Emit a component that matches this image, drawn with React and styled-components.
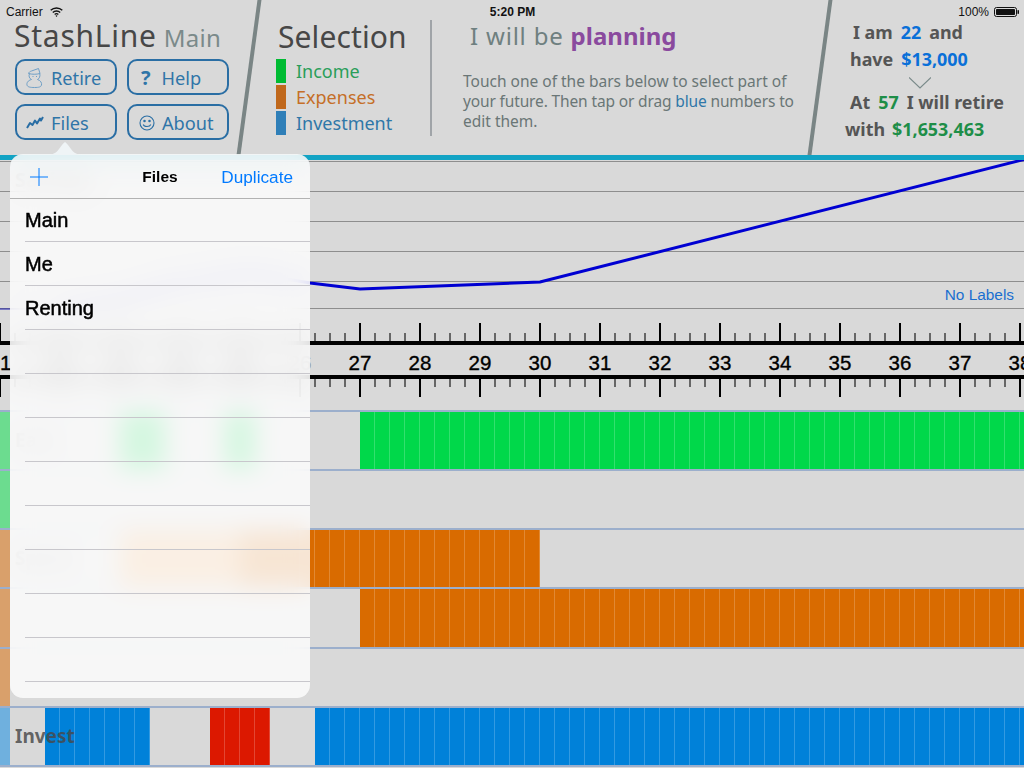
import React from 'react';
import styled, { createGlobalStyle } from 'styled-components';

const GREEN = '#00d84a';
const ORANGE = '#d96b00';
const BLUE = '#0081d9';
const RED = '#dc1800';
const TICKS = Array.from({ length: 69 }, (_, i) => i * 15);
const YEARS = Array.from({ length: 18 }, (_, i) => 21 + i);
const GRID = [1, 31, 61, 91, 121, 148];

const rows = [
  { stripe: '#6cdc8f', label: 'Earn', parts: [[110], [45, GREEN], [60], [30, GREEN], [105], [664, GREEN]] },
  { stripe: '#6cdc8f', parts: [] },
  { stripe: '#d9a06b', label: 'Spend', parts: [[110], [120, '#eda860'], [300, ORANGE]] },
  { stripe: '#d9a06b', parts: [[350], [664, ORANGE]] },
  { stripe: '#d9a06b', parts: [] },
  { stripe: '#6fb0de', label: 'Invest', strong: true, parts: [[35], [105, BLUE], [60], [60, RED], [45], [709, BLUE]] },
];

const GlobalStyle = createGlobalStyle`
  html, body {
    margin: 0;
    background: #d9d9d9;
    overflow: hidden;
  }
`;

const Page = styled.div`
  position: relative;
  width: 1024px;
  height: 768px;
  overflow: hidden;
  font-family: "Noto Sans", sans-serif;
`;

const StatusBar = styled.div`
  position: absolute;
  top: 5px;
  left: 6px;
  right: 5px;
  height: 14px;
  display: flex;
  align-items: center;
  justify-content: space-between;
  font: 12px/14px "Liberation Sans", sans-serif;
  color: #111;
  z-index: 2;
`;

const StatusSide = styled.div`
  width: 200px;
  display: flex;
  align-items: center;
  justify-content: ${p => (p.$right ? 'flex-end' : 'flex-start')};
  gap: ${p => (p.$right ? 5 : 7)}px;
`;

const Clock = styled.div`
  font-weight: 700;
  font-size: 12px;
`;

const Header = styled.header`
  height: 155px;
  display: flex;
  overflow: hidden;
`;

const Brand = styled.div`
  width: 233px;
  padding: 17px 0 0 14px;
  flex: none;
`;

const Title = styled.div`
  height: 42px;
  display: flex;
  align-items: baseline;
  gap: 7px;
  font-size: 30px;
  line-height: 38px;
  color: #474747;
  letter-spacing: 0.75px;
`;

const SubTitle = styled.span`
  font-size: 24px;
  letter-spacing: 0.3px;
  color: #7b8a8a;
`;

const ButtonGrid = styled.div`
  margin-left: 1px;
  display: grid;
  grid-template-columns: 102px 102px;
  grid-auto-rows: 36px;
  gap: 9px 10px;
`;

const Button = styled.div`
  box-sizing: border-box;
  border: 2px solid #2a6ea4;
  border-radius: 10px;
  display: flex;
  align-items: center;
  padding: 1px 0 0 ${p => p.$pad}px;
  gap: ${p => p.$gap}px;
  font-size: 18.2px;
  color: #2f75a8;
`;

const Question = styled.span`
  font-weight: 700;
  font-size: 20px;
`;

const Slash = styled.div`
  width: 4px;
  flex: none;
  background: #7a8585;
  transform: skewX(-7.7deg);
`;

const Selection = styled.div`
  width: 154px;
  flex: none;
  padding: 18px 0 0 25px;
`;

const SelectionTitle = styled.div`
  height: 41px;
  padding-left: 2px;
  font-size: 30px;
  line-height: 38px;
  color: #474747;
  letter-spacing: 0.1px;
`;

const Legend = styled.div`
  height: 26px;
  display: flex;
  align-items: flex-start;
  gap: 10px;
  font-size: 18px;
  line-height: 24px;
  color: ${p => p.$text};
`;

const Swatch = styled.span`
  width: 10px;
  height: 24px;
  flex: none;
  background: ${p => p.$color};
`;

const Divider = styled.div`
  width: 2px;
  height: 116px;
  margin-top: 20px;
  flex: none;
  background: #a0a4a8;
`;

const Intro = styled.div`
  width: 355px;
  flex: none;
  padding: 18px 0 0 31px;
`;

const IntroTitle = styled.div`
  height: 35px;
  padding-left: 7px;
  font-size: 24px;
  line-height: 36px;
  letter-spacing: 0.8px;
  color: #6f8080;
`;

const Planning = styled.b`
  letter-spacing: 0;
  color: #8a4a9e;
`;

const IntroText = styled.div`
  margin-top: 18px;
  font-size: 15.5px;
  line-height: 20px;
  color: #6a7676;
`;

const IntroLine = styled.div`
  white-space: nowrap;
  letter-spacing: ${p => (p.$tight ? '-0.14px' : '0')};
`;

const BlueWord = styled.span`
  color: #2f77a8;
`;

const Summary = styled.div`
  flex: 1;
  padding-top: 19px;
`;

const SummaryLine = styled.div`
  height: 27px;
  padding-left: ${p => p.$indent}px;
  display: flex;
  gap: ${p => p.$gap}px;
  font-size: 17.9px;
  font-weight: 700;
  line-height: 27px;
  color: #555;
  white-space: nowrap;
`;

const Figure = styled.span`
  color: ${p => p.$color};
`;

const ChevronRow = styled.div`
  height: 12px;
  padding: 4px 0 0 87px;
`;

const TealRule = styled.div`
  height: 5px;
  background: #12a3c4;
`;

const ChartArea = styled.div`
  position: relative;
  height: 163px;
`;

const Drawing = styled.svg`
  display: block;
`;

const ChartLabel = styled.div`
  position: absolute;
  left: 15px;
  top: 6px;
  font-size: 20px;
  font-weight: 700;
  color: #777;
`;

const NoLabels = styled.div`
  position: absolute;
  right: 10px;
  top: 126px;
  font: 15.4px/18px "Liberation Sans", sans-serif;
  color: #1a6fd0;
`;

const Rows = styled.div`
  display: flex;
  flex-direction: column;
  border-bottom: 2px solid #9cafcc;
`;

const Row = styled.div`
  position: relative;
  box-sizing: border-box;
  height: 59.15px;
  display: flex;
  border-top: 2px solid #9cafcc;
`;

const Stripe = styled.div`
  width: 10px;
  flex: none;
  background: ${p => p.$color};
`;

const Part = styled.div`
  width: ${p => p.$w}px;
  flex: none;
  background: ${p =>
    p.$color
      ? `repeating-linear-gradient(90deg, transparent 0 14px, rgba(255,255,255,.2) 14px 15px), ${p.$color}`
      : 'none'};
`;

const RowLabel = styled.div`
  position: absolute;
  left: 15px;
  top: 12px;
  font-size: 19px;
  font-weight: 700;
  line-height: 32px;
  color: ${p => (p.$strong ? 'rgba(72,72,72,.82)' : '#888')};
`;

const Popover = styled.div`
  position: absolute;
  left: 10px;
  top: 154px;
  width: 300px;
  height: 544px;
  border-radius: 13px;
  background: rgba(253, 253, 253, 0.84);
  -webkit-backdrop-filter: blur(12px);
  backdrop-filter: blur(12px);
  font-family: "Liberation Sans", sans-serif;
  color: #000;
  z-index: 3;
`;

const PopoverArrow = styled.svg`
  position: absolute;
  left: 35px;
  top: -13px;
  display: block;
`;

const PopoverHead = styled.div`
  box-sizing: border-box;
  height: 45px;
  margin-bottom: -1px;
  padding: 2px 17px 0 20px;
  display: grid;
  grid-template-columns: 1fr auto 1fr;
  align-items: center;
  border-bottom: 1px solid #b2b2b2;
`;

const PopoverTitle = styled.div`
  margin-right: 3px;
  font-size: 15.5px;
  font-weight: 700;
`;

const Duplicate = styled.div`
  justify-self: end;
  font-size: 17.2px;
  color: #007aff;
`;

const FileRow = styled.div`
  box-sizing: border-box;
  height: 44px;
  margin-left: 15px;
  padding-top: 2px;
  display: flex;
  align-items: center;
  border-bottom: 1px solid #c8c7cc;
  font-size: 20px;
  -webkit-text-stroke: 0.5px #000;
`;

function Wifi() {
  return (
    <Drawing width="13" height="10" viewBox="0 0 13 10" fill="none" stroke="#111" strokeWidth="1.4">
      <path d="M.7 3.3a8.3 8.3 0 0 1 11.6 0" />
      <path d="M2.8 5.5a5.3 5.3 0 0 1 7.4 0" />
      <path d="M4.7 7.5a2.6 2.6 0 0 1 3.6 0" />
      <path d="M6.5 10 5.5 8.8a1.5 1.5 0 0 1 2 0Z" fill="#111" stroke="none" />
    </Drawing>
  );
}

function Battery() {
  return (
    <Drawing width="25" height="10" viewBox="0 0 25 10">
      <rect x=".5" y=".5" width="22" height="9" rx="2" fill="none" stroke="#111" />
      <rect x="2" y="2" width="19" height="6" rx=".8" fill="#111" />
      <rect x="23.5" y="3.2" width="1.5" height="3.6" fill="#111" />
    </Drawing>
  );
}

function Snowman() {
  return (
    <Drawing width="17" height="20" viewBox="0 0 17 20" fill="none" stroke="#6f9fc6" strokeWidth="1">
      <path d="M3.500 5.500C2.500 8 3.200 10.500 5.500 11.500 1.800 12.500.5 15 1 17c.5 2 3 2.500 7.500 2.500s6.500-.5 7-2.500c.5-2-.8-4.500-4-5.500 2-1 2.800-3.200 2.300-6" />
      <path d="M2.500 5.500C3 4 4 3.500 5.500 3L12.500.5l1.500 5C10.500 6.500 6 6.500 2.500 5.500Z" />
      <path d="M6.500 8.500h1M10 8.500h1" />
    </Drawing>
  );
}

function Trend() {
  return (
    <Drawing width="18" height="13" viewBox="0 0 18 13" fill="none" stroke="#2a6ea4" strokeWidth="2" strokeLinejoin="round">
      <path d="M1 12 4 7l2.500 2L9 4.500l2 3 3-5 1 2 2-3.500" />
    </Drawing>
  );
}

function Smiley() {
  return (
    <Drawing width="16" height="16" viewBox="0 0 16 16" fill="none" stroke="#2a6ea4" strokeWidth="1.1">
      <circle cx="8" cy="8" r="7" />
      <circle cx="5.500" cy="6" r=".7" fill="#2a6ea4" />
      <circle cx="10.500" cy="6" r=".7" fill="#2a6ea4" />
      <path d="M4.200 9.500c1 2.700 6.600 2.700 7.600 0" />
    </Drawing>
  );
}

function Chart() {
  return (
    <ChartArea>
      <Drawing width="1024" height="163" viewBox="0 0 1024 163">
        {GRID.map(y => (
          <line key={y} x1="0" x2="1024" y1={y + 0.5} y2={y + 0.5} stroke="#8e8e8e" />
        ))}
        <line x1="0" x2="60" y1="149" y2="149" stroke="#1a1ab0" strokeWidth="1.2" />
        <polyline
          points="60,149 120,140 170,125 250,113 310,123 360,129 540,122 1026,-1"
          fill="none"
          stroke="#0000d2"
          strokeWidth="3"
        />
      </Drawing>
      <ChartLabel>Savings</ChartLabel>
      <NoLabels>No Labels</NoLabels>
    </ChartArea>
  );
}

function Ruler() {
  return (
    <Drawing width="1024" height="87" viewBox="0 0 1024 87">
      <rect x="0" y="18" width="1024" height="4" fill="#000" />
      <rect x="0" y="52" width="1024" height="4" fill="#000" />
      {TICKS.map(x => {
        const major = x % 60 === 0;
        return (
          <g key={x} stroke={major ? '#000' : '#666'} strokeWidth="2">
            <line x1={x} x2={x} y1={major ? 0 : 10} y2="18" />
            <line x1={x} x2={x} y1="56" y2={major ? 74 : 64} />
          </g>
        );
      })}
      {YEARS.map((year, i) => (
        <text
          key={year}
          x={i * 60}
          y="47"
          textAnchor="middle"
          fontFamily="Liberation Sans, sans-serif"
          fontSize="20.5"
          stroke="#000"
          strokeWidth=".35"
          opacity={year === 26 ? 0.3 : 1}
        >
          {year}
        </text>
      ))}
    </Drawing>
  );
}

function FilesPopover() {
  return (
    <Popover>
      <PopoverArrow width="40" height="14" viewBox="0 0 40 14">
        <path d="M0 14C8 14 11 12 14 8L17 4C18.500 2 20 1 20 1S21.500 2 23 4L26 8C29 12 32 14 40 14Z" fill="#eff4f6" />
      </PopoverArrow>
      <PopoverHead>
        <svg width="18" height="18" viewBox="0 0 18 18" stroke="#007aff" strokeWidth="1">
          <line x1="9" x2="9" y1="0" y2="18" />
          <line x1="0" x2="18" y1="9" y2="9" />
        </svg>
        <PopoverTitle>Files</PopoverTitle>
        <Duplicate>Duplicate</Duplicate>
      </PopoverHead>
      <FileRow>Main</FileRow>
      <FileRow>Me</FileRow>
      <FileRow>Renting</FileRow>
      {Array.from({ length: 8 }, (_, i) => (
        <FileRow key={i} />
      ))}
    </Popover>
  );
}

export default function App() {
  return (
    <Page>
      <GlobalStyle />
      <StatusBar>
        <StatusSide>
          Carrier
          <Wifi />
        </StatusSide>
        <Clock>5:20 PM</Clock>
        <StatusSide $right>
          100%
          <Battery />
        </StatusSide>
      </StatusBar>

      <Header>
        <Brand>
          <Title>
            StashLine<SubTitle>Main</SubTitle>
          </Title>
          <ButtonGrid>
            <Button $pad={9} $gap={8}><Snowman />Retire</Button>
            <Button $pad={12} $gap={11}><Question>?</Question>Help</Button>
            <Button $pad={9} $gap={7}><Trend />Files</Button>
            <Button $pad={10} $gap={7}><Smiley />About</Button>
          </ButtonGrid>
        </Brand>
        <Slash />
        <Selection>
          <SelectionTitle>Selection</SelectionTitle>
          <Legend $text="#2a9e5a"><Swatch $color="#00bb33" />Income</Legend>
          <Legend $text="#c56f28"><Swatch $color="#c0681c" />Expenses</Legend>
          <Legend $text="#2f77a8"><Swatch $color="#2f7fb8" />Investment</Legend>
        </Selection>
        <Divider />
        <Intro>
          <IntroTitle>I will be <Planning>planning</Planning></IntroTitle>
          <IntroText>
            <IntroLine>Touch one of the bars below to select part of</IntroLine>
            <IntroLine $tight>your future. Then tap or drag <BlueWord>blue</BlueWord> numbers to</IntroLine>
            <IntroLine>edit them.</IntroLine>
          </IntroText>
        </Intro>
        <Slash />
        <Summary>
          <SummaryLine $indent={31} $gap={8}>I am <Figure $color="#0a70d8">22</Figure> and</SummaryLine>
          <SummaryLine $indent={28} $gap={8}>have <Figure $color="#0a70d8">$13,000</Figure></SummaryLine>
          <ChevronRow>
            <Drawing width="22" height="12" viewBox="0 0 22 12" fill="none" stroke="#7a8a8a" strokeWidth="1.2">
              <path d="M0 .5 11 11 22 .5" />
            </Drawing>
          </ChevronRow>
          <SummaryLine $indent={28} $gap={8}>At <Figure $color="#1e8e48">57</Figure> I will retire</SummaryLine>
          <SummaryLine $indent={23} $gap={7}>with <Figure $color="#1e8e48">$1,653,463</Figure></SummaryLine>
        </Summary>
      </Header>

      <TealRule />
      <Chart />
      <Ruler />

      <Rows>
        {rows.map((row, i) => (
          <Row key={i}>
            <Stripe $color={row.stripe} />
            {row.parts.map(([w, color], j) => (
              <Part key={j} $w={w} $color={color} />
            ))}
            {row.label && <RowLabel $strong={row.strong}>{row.label}</RowLabel>}
          </Row>
        ))}
      </Rows>

      <FilesPopover />
    </Page>
  );
}
